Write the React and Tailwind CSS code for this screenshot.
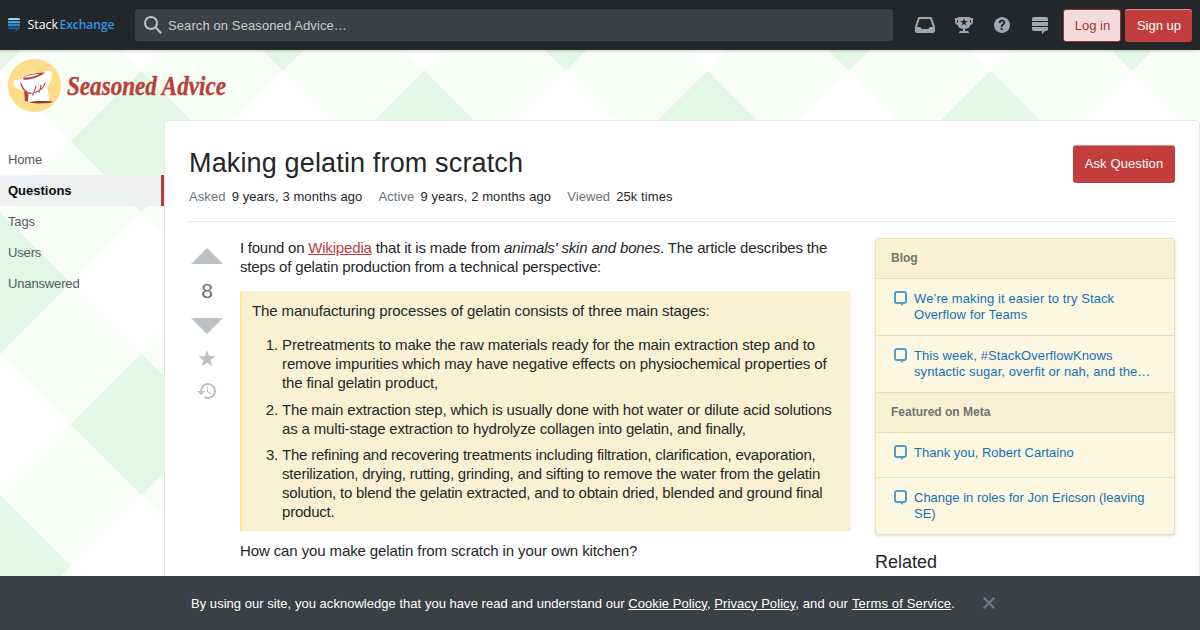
const navItems = ['Home', 'Questions', 'Tags', 'Users', 'Unanswered'];

const questionStats = [
    { label: 'Asked', value: '9 years, 3 months ago' },
    { label: 'Active', value: '9 years, 2 months ago' },
    { label: 'Viewed', value: '25k times' },
];

const bulletin = [
    {
        title: 'Blog',
        links: ['We’re making it easier to try Stack Overflow for Teams', 'This week, #StackOverflowKnows syntactic sugar, overfit or nah, and the…'],
        tracking: 'tracking-[0.09px]',
    },
    {
        title: 'Featured on Meta',
        links: ['Thank you, Robert Cartaino', 'Change in roles for Jon Ericson (leaving SE)'],
        tracking: 'tracking-[0px]',
    },
];

const stages = [
    {
        text: 'Pretreatments to make the raw materials ready for the main extraction step and to remove impurities which may have negative effects on physiochemical properties of the final gelatin product,',
        tracking: 'tracking-[-0.12px]',
    },
    {
        text: 'The main extraction step, which is usually done with hot water or dilute acid solutions as a multi-stage extraction to hydrolyze collagen into gelatin, and finally,',
        tracking: 'tracking-[-0.16px]',
    },
    {
        text: 'The refining and recovering treatments including filtration, clarification, evaporation, sterilization, drying, rutting, grinding, and sifting to remove the water from the gelatin solution, to blend the gelatin extracted, and to obtain dried, blended and ground final product.',
        tracking: 'tracking-[-0.21px]',
    },
];

const icons = {
    search: 'M18 16.5l-5.14-5.18h-.35a7 7 0 10-1.19 1.19v.35L16.5 18l1.5-1.5zM12 7A5 5 0 112 7a5 5 0 0110 0z',
    inbox: 'M15.19 1H4.63c-.85 0-1.6.54-1.85 1.35L0 10.79V15c0 1.1.9 2 2 2h16a2 2 0 002-2v-4.21l-2.87-8.44A2 2 0 0015.19 1zm-.28 10l-2 2h-6l-2-2H1.96L4.4 3.68A1 1 0 015.35 3h9.12a1 1 0 01.95.68L17.86 11h-2.95z',
    trophy: 'M15 2V1H3v1H0v4c0 1.6 1.4 3 3 3v1c.4 1.5 3 2.6 5 3v2H5s-1 1.5-1 2h10c0-.4-1-2-1-2h-3v-2c2-.4 4.6-1.5 5-3V9c1.6-.2 3-1.4 3-3V2h-3zM3 7c-.5 0-1-.5-1-1V4h1v3zm8.4 2.5L9 8 6.6 9.4l1-2.7L5 5h3l1-2.7L10 5h2.8l-2.3 1.8 1 2.7h-.1zM16 6c0 .5-.5 1-1 1V4h1v2z',
    help: 'M9 1C4.64 1 1 4.64 1 9c0 4.36 3.64 8 8 8 4.36 0 8-3.64 8-8 0-4.36-3.64-8-8-8zm.81 12.13c-.02.71-.55 1.15-1.24 1.13-.66-.02-1.17-.49-1.15-1.2.02-.72.56-1.18 1.22-1.16.7.03 1.2.51 1.17 1.23zM11.77 8c-.59.66-1.78 1.09-2.05 1.97a4 4 0 00-.09.75c0 .05-.03.16-.18.16H7.88c-.16 0-.18-.1-.18-.15.06-1.35.66-2.2 1.83-2.88.39-.29.7-.75.7-1.24.01-1.24-1.64-1.82-2.35-.72-.21.33-.18.73-.18 1.1H5.75c0-1.97 1.03-3.26 3.03-3.26 1.75 0 3.47.87 3.47 2.83 0 .57-.2 1.05-.48 1.44z',
    sites: 'M15 1H3a2 2 0 00-2 2v2h16V3a2 2 0 00-2-2zM1 13c0 1.1.9 2 2 2h8v3l3-3h1a2 2 0 002-2v-2H1v2zm16-7H1v4h16V6z',
    star: 'M9 12.65l-5.29 3.63 1.82-6.15L.44 6.22l6.42-.17L9 0l2.14 6.05 6.42.17-5.1 3.9 1.83 6.16L9 12.65z',
    history: 'M3 9a8 8 0 113.73 6.77L8.2 14.3A6 6 0 105 9l3.01-.01-4 4-4-4h3L3 9zm7-4h1.01L11 9.36l3.22 2.1-.6.93L10 10V5z',
    clear: 'M15 4.41L13.59 3 9 7.59 4.41 3 3 4.41 7.59 9 3 13.59 4.41 15 9 10.41 13.59 15 15 13.59 10.41 9 15 4.41z',
};

const Icon = ({ name, width = 18, className = '' }) => (
    <svg width={width} height="18" viewBox={`0 0 ${width} 18`} fill="currentColor" className={`shrink-0 overflow-visible ${className}`}>
        <path fillRule="evenodd" d={icons[name]} />
    </svg>
);

// diagonal gingham behind the whole page
const Gingham = () => (
    <svg className="absolute inset-0" width="1200" height="630">
        <defs>
            <pattern id="gingham" width="283" height="283" patternUnits="userSpaceOnUse">
                <rect width="283" height="283" fill="#f7fff7" />
                <path fill="#fff" d="M70.75 0L141.5 70.75 212.25 0zM70.75 283L141.5 212.25 212.25 283zM0 70.75L70.75 141.5 0 212.25zM283 70.75L212.25 141.5 283 212.25z" />
                <path fill="#e3f8e4" d="M141.5 70.75L212.25 141.5 141.5 212.25 70.75 141.5zM0 0H70.75L0 70.75zM283 0V70.75L212.25 0zM0 283V212.25L70.75 283zM283 283H212.25L283 212.25z" />
            </pattern>
        </defs>
        <rect width="1200" height="630" fill="url(#gingham)" />
    </svg>
);

const StackExchangeLogo = () => (
    <svg width="108" height="24" viewBox="0 -2 108 24" className="shrink-0 overflow-visible">
        <path fill="#8fd8f7" d="M0 4.500a1.500 1.500 0 011.500-1.500h9a1.500 1.500 0 011.500 1.500V5H0z" />
        <path fill="#46a2d9" d="M0 6h12v2.300H0z" />
        <path fill="#2f7fc4" d="M0 9h12v2.300H0z" />
        <path fill="#1f5196" d="M0 12h12v.5a2 2 0 01-2 2L7.500 17v-2.500H2a2 2 0 01-2-2z" />
        <text x="19.5" y="14" fill="#fff" fontFamily="'Open Sans', sans-serif" fontSize="13" fontWeight="500" textLength="30.5" lengthAdjust="spacingAndGlyphs">Stack</text>
        <text x="51.5" y="14" fill="#2f96e8" fontFamily="'Open Sans', sans-serif" fontSize="13" fontWeight="600" textLength="55" lengthAdjust="spacingAndGlyphs">Exchange</text>
    </svg>
);

const SiteLogo = () => (
    <svg width="224" height="54" viewBox="0 0 224 54" className="overflow-visible">
        <circle cx="26.5" cy="26.5" r="26.500" fill="#ffdc87" />
        {/* chef hat */}
        <path fill="#fff" d="M5.500 25C4.500 22 7 20 13 20.500C16 15 24 13 33 15C36 11 45 10 44 16C43.500 21 42 25 39 27L41 39C41.500 42 40 43 36 43L18 44L16 32C11 30.500 7 29 5.500 25z" />
        <path fill="#b6403a" d="M15 18.500C19 15 28 14 37 13.500C32 18 22 21.500 15.500 20.500L15 18.500C22 19 28 17 32 15C25 15 19 16.500 15 18.500z" />
        <g fill="none" stroke="#b6403a" strokeLinecap="round">
            <path strokeWidth="1.400" d="M13 25C14.500 30 18 34 23 34.500" />
            <path strokeWidth="1.100" d="M28 27C27.500 30 26 33 24.500 36M37 24C36 29 33 31.500 27 33.500M33 26C33 29 32 31 31 33" />
        </g>
        <path fill="#b6403a" d="M16 32L20.500 35L20 43L17 42z" />
        <path fill="#8e3b2c" d="M20 43.500C28 41.500 38 42 45 42.500L42 44L30 44.500z" />
        <text x="59" y="35.500" fill="#b9403a" stroke="#b9403a" strokeWidth="0.4" fontFamily="'Liberation Serif', serif" fontSize="28" fontStyle="italic" fontWeight="700" textLength="159" lengthAdjust="spacingAndGlyphs">Seasoned Advice</text>
    </svg>
);

const TopBar = () => (
    <header className="relative z-10 h-[50px] bg-[#242729] flex items-center px-2 shadow-[0_1px_3px_rgba(0,0,0,0.2)]">
        <StackExchangeLogo />
        <div className="ml-[19px] w-[758px] shrink-0 h-8 rounded-[3px] bg-[#3c4043] flex items-center pl-[9px] gap-[6px] text-[#bbc0c4]">
            <Icon name="search" />
            <span className="text-[#c8ccd0] tracking-[0.1px]">Search on Seasoned Advice…</span>
        </div>
        <div className="ml-[22px] flex items-center gap-5 text-[#9fa6ad]">
            <Icon name="inbox" width={20} />
            <Icon name="trophy" />
            <Icon name="help" />
            <Icon name="sites" />
        </div>
        <button className="ml-auto w-[58px] h-[33px] rounded-[3px] border border-[#8f3434] bg-[#f4dbdb] text-[#a73434] pl-px">Log in</button>
        <button className="ml-1 w-[67px] h-[33px] rounded-[3px] bg-[#c43d3d] text-white pl-px shadow-[inset_0_1px_0_rgba(255,255,255,0.4)]">Sign up</button>
    </header>
);

const LeftNav = () => (
    <nav className="w-[164px] shrink-0 pt-6">
        {navItems.map(item => (
            <a key={item} className={`flex items-center h-[31px] pl-2 ${item === 'Questions' ? 'bg-[#eff0f1] text-[#0c0d0e] font-bold border-r-3 border-[#bd3c3c]' : 'text-[#535a60] tracking-[-0.15px]'}`}>{item}</a>
        ))}
    </nav>
);

const VoteColumn = () => (
    <div className="w-9 shrink-0 flex flex-col items-center text-[#bbc0c4]">
        <svg width="36" height="36" viewBox="0 0 36 36" fill="currentColor"><path d="M2 26h32L18 10 2 26z" /></svg>
        <div className="h-[34px] pb-[2px] flex items-center text-[21px] text-[#6a737c]">8</div>
        <svg width="36" height="36" viewBox="0 0 36 36" fill="currentColor"><path d="M2 10h32L18 26 2 10z" /></svg>
        <Icon name="star" className="mt-[6px]" />
        <Icon name="history" width={19} className="mt-[14px] mr-px" />
    </div>
);

const Bulletin = () => (
    <div className="rounded-[3px] border border-[#ebe0b8] bg-[#fdf7e2] shadow-[0_1px_3px_rgba(12,13,14,0.15)] divide-y divide-[#ebe0b8]">
        {bulletin.map(section => (
            <div key={section.title} className="divide-y divide-[#ebe0b8]">
                <div className="h-10 pb-[2px] flex items-center pl-[15px] text-xs font-bold text-[#72746f] bg-[#faf1d2]">{section.title}</div>
                {section.links.map(link => (
                    <div key={link} className="flex pl-[18px] pr-4 py-3 min-h-[45px]">
                        <svg width="14" height="16" viewBox="0 0 14 16" className="shrink-0 mr-[6px]">
                            <rect x="1" y="1" width="11" height="11" rx="2" fill="none" stroke="#4a9fd0" strokeWidth="2" />
                            <path d="M5 12h4.500L8.500 15z" fill="#4a9fd0" />
                        </svg>
                        <a className={`leading-4 text-[#1371b8] ${section.tracking}`}>{link}</a>
                    </div>
                ))}
            </div>
        ))}
    </div>
);

const CookieBanner = () => (
    <div className="absolute z-20 bottom-0 inset-x-0 h-[54px] bg-[#3b4045] text-white flex items-center pl-[191px]">
        <p className="tracking-[0.07px]">
            <span className="tracking-[0.03px]">By using our site, you acknowledge that you have read and understand our </span><a className="underline">Cookie Policy</a>, <a className="underline">Privacy Policy</a>, <span className="tracking-[0.2px]">and our </span><a className="underline tracking-[0.15px]">Terms of Service</a>.
        </p>
        <Icon name="clear" className="ml-[25px] text-[#737b83]" />
    </div>
);

const App = () => (
    <div className="relative w-[1200px] h-[630px] overflow-hidden bg-white text-[13px] leading-[17px] text-[#242729] font-['Liberation_Sans',Arial,sans-serif]">
        <Gingham />
        <TopBar />
        <div className="relative h-[70px] pl-2 pt-[9px]">
            <SiteLogo />
        </div>
        <div className="relative flex">
            <LeftNav />
            <main className="flex-1 h-[560px] border border-[#e4e6e8] rounded-t-[4px] bg-white px-6 pt-6">
                <div className="flex justify-between">
                    <h1 className="text-[27px] leading-9 tracking-[0.15px]">Making gelatin from scratch</h1>
                    <button className="w-[102px] h-[38px] pb-[2px] rounded-[3px] bg-[#c43d3d] text-white tracking-[0.1px] shadow-[inset_0_1px_0_rgba(255,255,255,0.4)]">Ask Question</button>
                </div>
                <div className="flex gap-4 pt-[5px] pb-4 border-b border-[#e4e6e8] tracking-[0.1px]">
                    {questionStats.map(stat => (
                        <div key={stat.label}>
                            <span className="text-[#6a737c] mr-[6px]">{stat.label}</span>{stat.value}
                        </div>
                    ))}
                </div>
                <div className="flex pt-4">
                    <VoteColumn />
                    <div className="ml-[15px] w-[611px] text-[15px] leading-[19px] tracking-[-0.11px]">
                        <p className="tracking-[-0.16px]">
                            <span className="tracking-[-0.25px]">I found on </span><a className="text-[#bd3c3c] underline">Wikipedia</a> that it is made from <em>animals' skin and bones</em>. The article describes the steps of gelatin production from a technical perspective:
                        </p>
                        <blockquote className="mt-[15px] h-[240px] bg-[#faf1d2] border-l-2 border-[#ffeb8e] p-[10px]">
                            <p>The manufacturing processes of gelatin consists of three main stages:</p>
                            <ol className="mt-[15px] ml-[30px] list-decimal space-y-[7.500px]">
                                {stages.map(stage => <li key={stage.text} className={stage.tracking}>{stage.text}</li>)}
                            </ol>
                        </blockquote>
                        <p className="mt-[10px]">How can you make gelatin from scratch in your own kitchen?</p>
                    </div>
                    <aside className="ml-6 w-[300px]">
                        <Bulletin />
                        <h4 className="mt-[15px] text-lg leading-6">Related</h4>
                    </aside>
                </div>
            </main>
        </div>
        <CookieBanner />
    </div>
);

export default App;
